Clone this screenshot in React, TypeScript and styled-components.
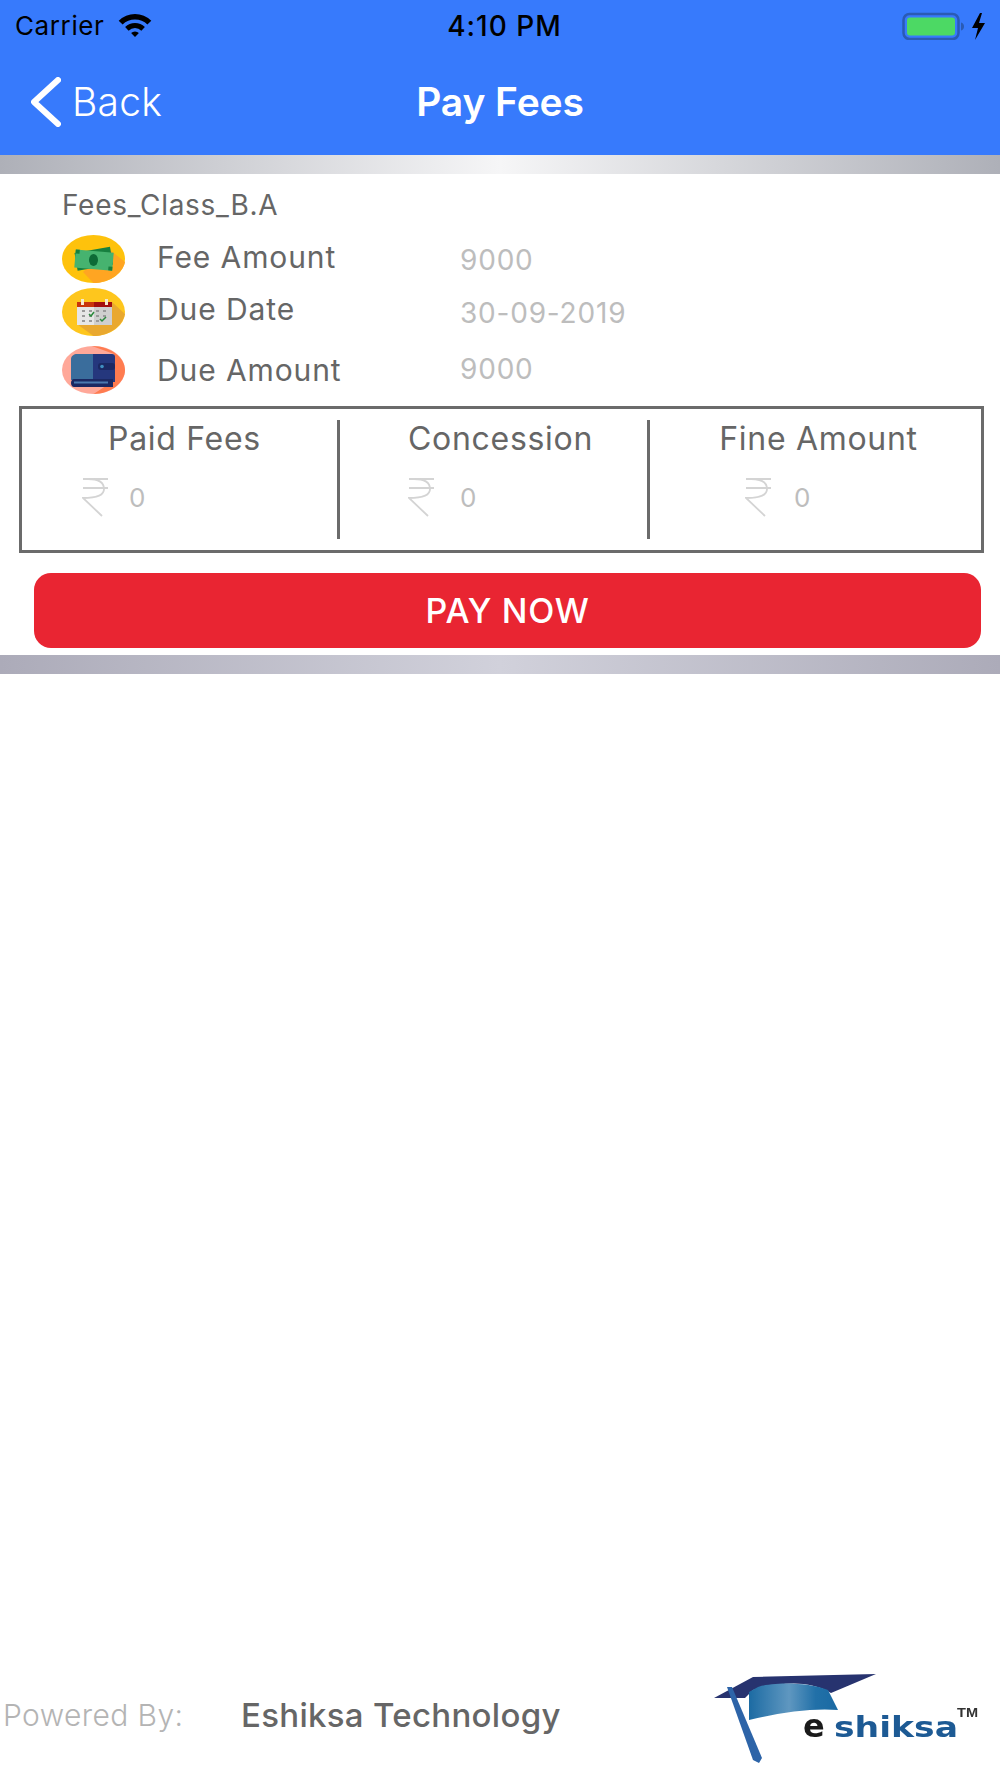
import styled, { createGlobalStyle } from 'styled-components';

const GlobalStyle = createGlobalStyle`
  html, body {
    margin: 0;
    padding: 0;
    background: #fff;
    font-family: Inter, "Liberation Sans", sans-serif;
  }
`;

const Page = styled.div`
  width: 1000px;
  height: 1778px;
  display: flex;
  flex-direction: column;
  background: #fff;
  overflow: hidden;
`;

const Header = styled.header`
  height: 155px;
  background: #377afc;
  display: flex;
  flex-direction: column;
`;

const StatusBar = styled.div`
  height: 51px;
  padding: 0 12px 0 15px;
  display: flex;
  align-items: center;
  justify-content: space-between;
  color: #000;
  font-size: 26px;
  letter-spacing: 0.6px;
`;

const StatusSide = styled.div<{ $end?: boolean }>`
  width: 200px;
  display: flex;
  align-items: center;
  gap: 14px;
  justify-content: ${(p) => (p.$end ? 'flex-end' : 'flex-start')};
`;

const Clock = styled.div`
  margin-left: 6px;
  font-weight: 500;
  font-size: 28px;
  letter-spacing: 1px;
`;

const NavBar = styled.nav`
  flex: 1;
  display: flex;
  align-items: center;
  position: relative;
  padding: 0 0 3px 31px;
  color: #fff;
`;

const BackLink = styled.div`
  display: flex;
  align-items: center;
  gap: 11px;
  font-size: 39px;
  font-weight: 300;
  letter-spacing: 0.2px;
`;

const NavTitle = styled.div`
  position: absolute;
  left: 0;
  right: 0;
  text-align: center;
  font-size: 39px;
  font-weight: 600;
  letter-spacing: -0.1px;
`;

const Strip = styled.div<{ $edge: string; $mid: string }>`
  height: 19px;
  background: linear-gradient(90deg, ${(p) => p.$edge}, ${(p) => p.$mid} 50%, ${(p) => p.$edge});
`;

const ClassName = styled.div`
  margin: 14px 0 0 62px;
  height: 34px;
  line-height: 34px;
  font-size: 28px;
  letter-spacing: 0.7px;
  color: #666;
`;

const InfoList = styled.div`
  margin-top: 13px;
  display: flex;
  flex-direction: column;
`;

const InfoRow = styled.div<{ $top: number }>`
  margin-top: ${(p) => p.$top}px;
  height: 48px;
  padding-left: 62px;
  display: flex;
  align-items: center;
`;

const InfoLabel = styled.div<{ $shift: number }>`
  width: 303px;
  margin-left: 32px;
  font-size: 30px;
  letter-spacing: 0.9px;
  color: #666;
  transform: translateY(${(p) => p.$shift}px);
`;

const InfoValue = styled.div<{ $shift: number }>`
  font-size: 28px;
  letter-spacing: 0.8px;
  color: #bdbdbd;
  transform: translateY(${(p) => p.$shift}px);
`;

const SummaryBox = styled.div`
  margin: 12px 0 0 19px;
  width: 965px;
  height: 147px;
  box-sizing: border-box;
  border: 3px solid #6b6b6b;
  display: grid;
  grid-template-columns: 318px 310px 1fr;
  padding: 11px 0;
`;

const SummaryCell = styled.div<{ $divided?: boolean; $indent: number; $titleOffset: number; $gap: number }>`
  display: flex;
  flex-direction: column;
  border-right: ${(p) => (p.$divided ? '3px solid #6b6b6b' : 'none')};
  --indent: ${(p) => p.$indent}px;
  --title-offset: ${(p) => p.$titleOffset}px;
  --money-gap: ${(p) => p.$gap}px;
`;

const SummaryTitle = styled.div`
  height: 38px;
  line-height: 38px;
  padding-left: var(--title-offset);
  text-align: center;
  font-size: 32px;
  letter-spacing: 0.7px;
  color: #666;
`;

const Money = styled.div`
  margin-top: 19px;
  padding-left: var(--indent);
  display: flex;
  align-items: center;
  gap: var(--money-gap);
  font-size: 26px;
  color: #bdbdbd;
`;

const PayButton = styled.button`
  display: block;
  margin: 20px 0 0 34px;
  width: 947px;
  height: 75px;
  border: none;
  border-radius: 17px;
  background: #e92532;
  color: #fff;
  font-family: inherit;
  font-size: 34px;
  font-weight: 500;
  letter-spacing: 0.7px;
  padding: 0;
`;

const BottomStrip = styled(Strip)`
  margin-top: 7px;
`;

const Footer = styled.footer`
  margin-top: auto;
  height: 120px;
  display: flex;
  align-items: center;
  padding-bottom: 6px;
  box-sizing: border-box;
`;

const PoweredBy = styled.div`
  margin-left: 3px;
  width: 238px;
  font-size: 30px;
  font-weight: 300;
  letter-spacing: 0.4px;
  color: #b4b4b4;
`;

const CompanyName = styled.div`
  font-size: 33px;
  font-weight: 500;
  letter-spacing: 0.3px;
  color: #666;
`;

const LogoWrap = styled.div`
  margin: 6px 19px 0 auto;
  display: flex;
  filter: blur(0.6px);
`;

function WifiIcon() {
  return (
    <svg width="34" height="25" viewBox="0 0 34 25" fill="#000">
      <path d="M.7 7.700A23 23 0 0 1 33.300 7.700L29.400 11.600A17.500 17.500 0 0 0 4.600 11.600Z" />
      <path d="M7.100 14.100A14 14 0 0 1 26.900 14.100L23.360 17.640A9 9 0 0 0 10.640 17.640Z" />
      <path d="M13.100 20.100A5.500 5.500 0 0 1 20.900 20.100L17 24Z" />
    </svg>
  );
}

function BatteryIcon() {
  return (
    <svg width="86" height="28" viewBox="0 0 86 28">
      <rect x="1.500" y="2" width="55" height="25" rx="6" fill="none" stroke="#2a5bb4" strokeWidth="2.500" />
      <rect x="5" y="5.500" width="48" height="18" rx="3" fill="#4cd964" />
      <path d="M59 10.500c2 .5 3 2 3 4s-1 3.500-3 4Z" fill="#2a5bb4" />
      <path d="M78 1 70 16h6l-3 12 10-17h-6l3-10Z" fill="#000" />
    </svg>
  );
}

function BackChevron() {
  return (
    <svg width="30" height="50" viewBox="0 0 30 50">
      <path d="M27 3 3 25l24 22" fill="none" stroke="#fff" strokeWidth="6" strokeLinecap="round" strokeLinejoin="round" />
    </svg>
  );
}

function MoneyIcon() {
  return (
    <svg width="63" height="48" viewBox="0 0 63 48">
      <ellipse cx="31.500" cy="24" rx="31.500" ry="24" fill="#fec20c" />
      <path d="M21 37 48 15 63 27C60 40 45 48 31.500 48Z" fill="#ffa522" />
      <rect x="14" y="15" width="36" height="18" fill="#17803f" transform="rotate(-10 31 25)" />
      <rect x="13" y="16" width="38" height="18" fill="#46b36f" transform="rotate(5 31 25)" />
      <rect x="13" y="16" width="4" height="4" fill="#17803f" transform="rotate(5 31 25)" />
      <rect x="47" y="30" width="4" height="4" fill="#17803f" transform="rotate(5 31 25)" />
      <ellipse cx="31.500" cy="25" rx="4.500" ry="6" fill="#0d6a36" />
    </svg>
  );
}

function CalendarIcon() {
  return (
    <svg width="63" height="48" viewBox="0 0 63 48">
      <ellipse cx="31.500" cy="24" rx="31.500" ry="24" fill="#fec61d" />
      <path d="M15 36 50 14 63 26C60 40 45 48 31.500 48Z" fill="#e9a82f" />
      <rect x="15" y="14" width="35" height="23" fill="#e6e6e6" />
      <rect x="32" y="14" width="18" height="23" fill="#cfcfcf" />
      <rect x="15" y="14" width="17" height="5" fill="#c9340c" />
      <rect x="32" y="14" width="18" height="5" fill="#a30f0f" />
      <rect x="19" y="11" width="3" height="6" fill="#f5ead0" />
      <rect x="43" y="11" width="3" height="6" fill="#f5ead0" />
      <path d="M20 23h3M27 23h3M34 23h3M41 23h3M20 28h3M27 28h3M34 28h3M41 28h3M20 33h3M27 33h3M34 33h3" stroke="#9a9a9a" strokeWidth="2" />
      <path d="M27 26l2 2 3-4M38 31l2 2 4-4" fill="none" stroke="#2c8a3e" strokeWidth="1.500" />
    </svg>
  );
}

function WalletIcon() {
  return (
    <svg width="63" height="48" viewBox="0 0 63 48">
      <ellipse cx="31.500" cy="24" rx="31.500" ry="24" fill="#ffa899" />
      <path d="M30 0C48 0 63 11 63 24S48 48 31.500 48L50 36 52 8Z" fill="#ff7c50" />
      <path d="M9 13C9 10 12 8 15 8H31V34H9Z" fill="#3a6d9c" />
      <path d="M31 8H50C52 8 53 9 53 11V36H31Z" fill="#25377d" />
      <rect x="36" y="17" width="17" height="7" rx="3" fill="#1b2862" />
      <circle cx="40" cy="20.500" r="1.800" fill="#3f8fc0" />
      <path d="M12 33H51V41H12C8 41 8 33 12 33Z" fill="#1b2862" />
      <rect x="12" y="35.500" width="34" height="2" fill="#4b79b0" />
    </svg>
  );
}

function RupeeIcon() {
  return (
    <svg width="26" height="40" viewBox="0 0 26 40" fill="none" stroke="#d4d4d4" strokeWidth="1.800">
      <path d="M1 2H26M1 11H26" />
      <path d="M6 2C17 2 22 6 22 12S16 21 1 21L20 39" />
    </svg>
  );
}

function EshiksaLogo() {
  return (
    <svg width="268" height="96" viewBox="0 0 268 96">
      <defs>
        <linearGradient id="capFold" x1="0" x2="1" y1="0" y2="0">
          <stop offset="0" stopColor="#1c6ba3" />
          <stop offset="0.45" stopColor="#5f97c0" />
          <stop offset="0.75" stopColor="#2170a8" />
          <stop offset="1" stopColor="#1a6aa3" />
        </linearGradient>
      </defs>
      <path d="M1 28 40 7 163 4 118 23C95 10 70 12 40 20L32 28Z" fill="#27336f" />
      <path d="M36 22 45 17C60 12 95 12 115 20L125 40C100 38 70 42 36 50Z" fill="url(#capFold)" />
      <path d="M14 17H19L49 88 46 93 40 90Z" fill="#2d64a8" />
      <text x="90" y="67" fontFamily="'DejaVu Sans', sans-serif" fontWeight="700" fontSize="32" fill="#1a1a1a">e</text>
      <text x="121" y="67" fontFamily="'DejaVu Sans', sans-serif" fontWeight="700" fontSize="28" fill="#1d5a94" textLength="124" lengthAdjust="spacingAndGlyphs">shiksa</text>
      <text x="244" y="47" fontFamily="'Liberation Sans', sans-serif" fontWeight="700" fontSize="12" fill="#333" textLength="21" lengthAdjust="spacingAndGlyphs">TM</text>
    </svg>
  );
}

const infoRows = [
  { label: 'Fee Amount', value: '9000', top: 0, icon: <MoneyIcon />, labelShift: -2, valueShift: 1 },
  { label: 'Due Date', value: '30-09-2019', top: 5, icon: <CalendarIcon />, labelShift: -3, valueShift: 1 },
  { label: 'Due Amount', value: '9000', top: 10, icon: <WalletIcon />, labelShift: 0, valueShift: -1 },
];

const summary = [
  { title: 'Paid Fees', indent: 60, titleOffset: 10, gap: 21, divided: true },
  { title: 'Concession', indent: 68, titleOffset: 14, gap: 26, divided: true },
  { title: 'Fine Amount', indent: 95, titleOffset: 6, gap: 23, divided: false },
];

export default function App() {
  return (
    <Page>
      <GlobalStyle />
      <Header>
        <StatusBar>
          <StatusSide>
            Carrier
            <WifiIcon />
          </StatusSide>
          <Clock>4:10 PM</Clock>
          <StatusSide $end>
            <BatteryIcon />
          </StatusSide>
        </StatusBar>
        <NavBar>
          <BackLink>
            <BackChevron />
            Back
          </BackLink>
          <NavTitle>Pay Fees</NavTitle>
        </NavBar>
      </Header>
      <Strip $edge="#aeb0b8" $mid="#f6f6f7" />
      <ClassName>Fees_Class_B.A</ClassName>
      <InfoList>
        {infoRows.map((row) => (
          <InfoRow key={row.label} $top={row.top}>
            {row.icon}
            <InfoLabel $shift={row.labelShift}>{row.label}</InfoLabel>
            <InfoValue $shift={row.valueShift}>{row.value}</InfoValue>
          </InfoRow>
        ))}
      </InfoList>
      <SummaryBox>
        {summary.map((cell) => (
          <SummaryCell
            key={cell.title}
            $divided={cell.divided}
            $indent={cell.indent}
            $titleOffset={cell.titleOffset}
            $gap={cell.gap}
          >
            <SummaryTitle>{cell.title}</SummaryTitle>
            <Money>
              <RupeeIcon />
              0
            </Money>
          </SummaryCell>
        ))}
      </SummaryBox>
      <PayButton>PAY NOW</PayButton>
      <BottomStrip $edge="#acabb9" $mid="#d1d1db" />
      <Footer>
        <PoweredBy>Powered By:</PoweredBy>
        <CompanyName>Eshiksa Technology</CompanyName>
        <LogoWrap>
          <EshiksaLogo />
        </LogoWrap>
      </Footer>
    </Page>
  );
}
